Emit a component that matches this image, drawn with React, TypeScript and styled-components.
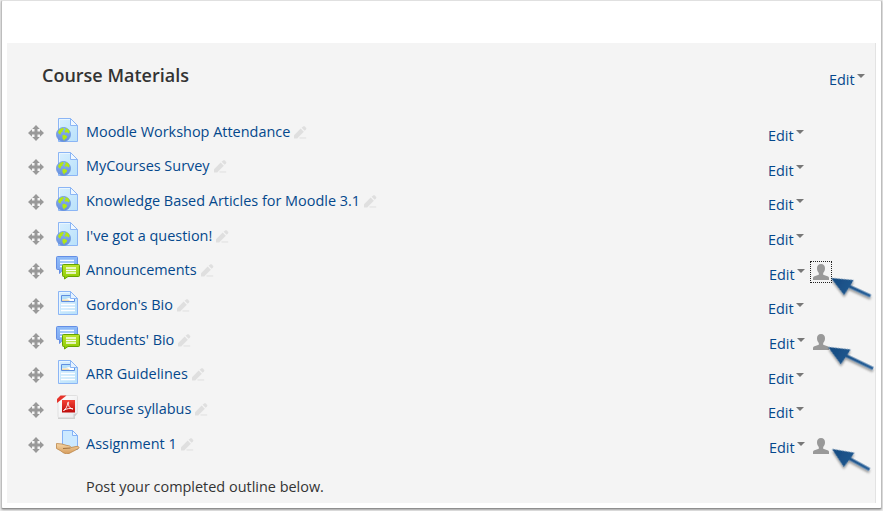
import React from "react";
import styled, { createGlobalStyle } from "styled-components";

const GlobalStyle = createGlobalStyle`
  * { box-sizing: border-box; }
  body { margin: 0; background: #fff; }
`;

const Backdrop = styled.div`
  width: 883px;
  height: 511px;
  padding: 0 1px 2px;
  background: #ececec;
  overflow: hidden;
`;

const Window = styled.div`
  height: 509px;
  padding: 42px 5px 0 5px;
  background: #fff;
  border-style: solid;
  border-width: 1px;
  border-color: #e0e0e0 #bdbdbd #8f8f8f #bdbdbd;
  border-radius: 2px;
  box-shadow: 0 1px 2px rgba(0, 0, 0, 0.3);
  font-family: "Open Sans", "Noto Sans", sans-serif;
  font-size: 14.45px;
  color: #333;
`;

const Section = styled.section`
  width: 869px;
  height: 460px;
  background: #f4f4f4;
  border-right: 1px solid #e3e3e3;
`;

const Header = styled.header`
  display: flex;
  justify-content: space-between;
  height: 73px;
  padding: 19px 10px 0 35px;
`;

const Title = styled.h3`
  margin: 0;
  font-size: 18px;
  line-height: 26px;
  font-weight: 600;
  color: #333;
  white-space: nowrap;
`;

const List = styled.ul`
  list-style: none;
  margin: 0;
  padding: 0;
`;

const Row = styled.li`
  display: flex;
  align-items: flex-start;
  height: 34.67px;
  padding-left: 21px;
`;

const Handle = styled.svg`
  flex: none;
  width: 16px;
  height: 16px;
  margin-top: 8.8px;
`;

const Activity = styled.div`
  flex: none;
  display: flex;
  align-items: flex-start;
  width: 724px;
  padding-left: 12px;
`;

const ActivityIcon = styled.svg`
  flex: none;
  width: 25px;
  height: 24px;
  margin: 1.7px 5px 0 0;
`;

const ActivityLink = styled.a`
  color: #04488c;
  line-height: 20px;
  margin-top: 5.7px;
  white-space: nowrap;
`;

const Pencil = styled.svg`
  flex: none;
  width: 13px;
  height: 13px;
  margin: 9.8px 0 0 4px;
`;

const EditMenu = styled.a<{ $top: number; $shift?: boolean }>`
  flex: none;
  display: flex;
  align-items: flex-start;
  justify-content: space-between;
  width: 36px;
  height: 20px;
  line-height: 20px;
  margin-top: ${(p) => p.$top}px;
  margin-left: ${(p) => (p.$shift ? 1 : 0)}px;
  color: #04488c;
`;

const Caret = styled.span`
  margin-top: 4px;
  border: 4px solid transparent;
  border-top-color: #777;
  border-bottom: 0;
`;

const GroupMode = styled.span<{ $focused?: boolean }>`
  flex: none;
  display: flex;
  align-items: center;
  justify-content: center;
  width: 22px;
  height: 22px;
  margin: 6.7px 0 0 5px;
  border: 1px ${(p) => (p.$focused ? "dotted #222" : "solid transparent")};
`;

const Pointer = styled.svg<{ $dx: number; $dy: number }>`
  flex: none;
  width: 46px;
  height: 30px;
  overflow: visible;
  margin: ${(p) => p.$dy}px 0 0 ${(p) => p.$dx}px;
`;

const Note = styled.p`
  margin: 14px 0 0 79px;
  line-height: 20px;
`;

const Palette = styled.svg`
  display: block;
  width: 0;
  height: 0;
`;

type Kind = "url" | "forum" | "page" | "pdf" | "assign";

const MoveIcon = () => (
  <Handle viewBox="0 0 16 16">
    <path
      fill="#999"
      d="M8 0l3.800 4H9.500v2.500H12V4.200L16 8l-4 3.800V9.500H9.500V12h2.300L8 16l-3.800-4h2.300V9.500H4v2.300L0 8l4-3.800v2.300h2.500V4H4.200z"
    />
  </Handle>
);

const Paper = () => (
  <>
    <path d="M2.500.5h12l7 7v16h-19z" fill="url(#paper)" stroke="#8bb5f5" />
    <path d="M3.500 22.500v-21h10.500" fill="none" stroke="#e9f6ff" />
    <path d="M14.500.5v7h7z" fill="#f0f8ff" stroke="#8bb5f5" />
  </>
);

const KindIcon = ({ kind }: { kind: Kind }) => (
  <ActivityIcon viewBox="0 0 25 24">
    {kind === "url" && (
      <>
        <Paper />
        <circle cx="7.500" cy="16.500" r="7" fill="url(#globe)" stroke="#6690dd" strokeWidth=".8" />
        <path
          fill="#b2e713"
          d="M2 14l2-3 3-1.200 1 1.400-1.600 1.200.3 1.400-1.700.6-.3 2-1.700-.3zM9 10l3 1 1.600 2.400-.6 2-2-1.200-2 .6-.5-1.800 1.300-1zM6.500 17.300l2-.5 2.600 1.500-.6 2-1.800 1-.5 1.700-1.800-3z"
        />
      </>
    )}
    {kind === "page" && (
      <>
        <Paper />
        <path d="M5.500 4.500h13v6h-13z" fill="#fff" stroke="#5f8fe0" />
        <path d="M6 8.500h6l2 1.500H6z" fill="#efd9a8" />
        <path d="M6 5h10v3l-3-1-4 1.200H6z" fill="#b4e0fa" />
        <path d="M14.500.5v7h7z" fill="#e6f3ff" stroke="#8bb5f5" />
        <path d="M5 13.500h14M5 16.500h14M5 19.500h14" stroke="#fff" strokeWidth="1.500" />
      </>
    )}
    {kind === "forum" && (
      <>
        <path
          d="M1.500.5h19a1 1 0 0 1 1 1v11a1 1 0 0 1-1 1H7L3.500 17.500v-4h-2a1 1 0 0 1-1-1v-11a1 1 0 0 1 1-1z"
          fill="url(#chat)"
          stroke="#648ee5"
        />
        <path d="M4 4.500h14M4 7.500h14M4 10.500h10" stroke="#f4faff" strokeWidth="1.300" />
        <path
          d="M7.500 8.500h15a1 1 0 0 1 1 1v10a1 1 0 0 1-1 1H12L8.500 23v-2.500h-1a1 1 0 0 1-1-1v-10a1 1 0 0 1 1-1z"
          fill="url(#reply)"
          stroke="#65a300"
        />
        <path d="M10 12h10M10 14.500h10M10 17h10" stroke="#fbfff0" strokeWidth="1.300" />
      </>
    )}
    {kind === "pdf" && (
      <>
        <path d="M2 23h17" stroke="#c4c4c4" strokeWidth="1.500" />
        <path d="M8.500.5h12a1 1 0 0 1 1 1v16.500l-4 4.500H3a1 1 0 0 1-1-1V7z" fill="url(#sheet)" stroke="#e0e0e0" />
        <path d="M1 8V4L4.500.5h6z" fill="#e6342b" />
        <path d="M21.500 18l-4 5v-4z" fill="#ccc" />
        <path d="M6 5h13v12.500H6z" fill="url(#pdf)" />
        <path
          d="M7.500 15.500c2-1 4-4 4.300-8 .2-1 1.200-.4.8.8-.6 3 1.500 5.200 4.400 5.700-2.500-1-6-.7-9.500 1.500z"
          fill="none"
          stroke="#fff"
          strokeWidth=".9"
        />
      </>
    )}
    {kind === "assign" && (
      <>
        <path d="M6.500.5h10l5 5v14h-15z" fill="#cce9ff" stroke="#83b1f6" />
        <path d="M16.500.5v5h5z" fill="#edf7ff" stroke="#83b1f6" />
        <path
          d="M.5 13.500L6 14l5 1.500c2 0 3.500.5 4 2l5-1c2-.5 4 .5 2.500 2l-9.500 5c-3 1-6-.5-8-2.500L.5 18.500z"
          fill="url(#hand)"
          stroke="#bc8649"
          strokeWidth=".8"
        />
        <path d="M7 18.500l7.500-.5" stroke="#9f713e" />
      </>
    )}
  </ActivityIcon>
);

const PencilIcon = () => (
  <Pencil viewBox="0 0 13 13">
    <path d="M0 12.500V9.300L6.700 2.600l3.100 3.100L3.200 12.500z" fill="#dfdfdf" />
    <path d="M7.600 1.800L9.200.4q.8-.6 1.500 0l1.400 1.400q.6.800 0 1.500l-1.400 1.500z" fill="#dfdfdf" />
    <path d="M5.500 12h6.700" stroke="#dfdfdf" />
  </Pencil>
);

const Person = () => (
  <svg width="16" height="16" viewBox="0 0 16 16">
    <path
      fill="#999"
      d="M8 0c2.600 0 4 1.700 4 4.200 0 2-.7 3.700-1.800 4.800v1.700l4.300 1.500c1 .4 1.500 1 1.500 2V16H0v-1.800c0-1 .5-1.600 1.500-2l4.300-1.500V9C4.700 7.900 4 6.200 4 4.200 4 1.700 5.400 0 8 0z"
    />
  </svg>
);

const Arrow = ({ dx, dy, tail }: { dx: number; dy: number; tail: [number, number] }) => {
  const len = Math.hypot(tail[0], tail[1]);
  const angle = (Math.atan2(tail[1], tail[0]) * 180) / Math.PI;
  return (
    <Pointer $dx={dx} $dy={dy} viewBox="0 0 46 30">
      <g transform={`rotate(${angle})`} filter="url(#shadow)">
        <path d={`M0 0L21.500-7.500 20.700-1.600H${len}V1.600H20.200L19 10z`} fill="url(#arrow)" />
      </g>
    </Pointer>
  );
};

const Defs = () => (
  <Palette>
    <defs>
      <linearGradient id="paper" x2="1" y2="1">
        <stop stopColor="#d8efff" />
        <stop offset="1" stopColor="#b9e1fa" />
      </linearGradient>
      <linearGradient id="globe" x2="0" y2="1">
        <stop stopColor="#8cb4f2" />
        <stop offset="1" stopColor="#668edc" />
      </linearGradient>
      <linearGradient id="chat" x2="0" y2="1">
        <stop stopColor="#8fbcf9" />
        <stop offset="1" stopColor="#7ba4f0" />
      </linearGradient>
      <linearGradient id="reply" x2="0" y2="1">
        <stop stopColor="#bce42d" />
        <stop offset="1" stopColor="#8bcb00" />
      </linearGradient>
      <linearGradient id="sheet" x2="1" y2="1">
        <stop stopColor="#ffffff" />
        <stop offset="1" stopColor="#e8e8ea" />
      </linearGradient>
      <linearGradient id="pdf" x2="0" y2="1">
        <stop stopColor="#f44236" />
        <stop offset="1" stopColor="#bd0b0b" />
      </linearGradient>
      <linearGradient id="hand" x2="0" y2="1">
        <stop stopColor="#f7d7a6" />
        <stop offset="1" stopColor="#d59b5b" />
      </linearGradient>
      <linearGradient id="arrow" x2="1" y2="0">
        <stop stopColor="#144a80" />
        <stop offset="1" stopColor="#2a629b" />
      </linearGradient>
      <filter id="shadow" x="-20%" y="-40%" width="140%" height="200%">
        <feDropShadow dx="1" dy="2" stdDeviation="1" floodColor="#000" floodOpacity=".4" />
      </filter>
    </defs>
  </Palette>
);

interface Item {
  kind: Kind;
  name: string;
  focused?: boolean;
  arrow?: { dx: number; dy: number; tail: [number, number] };
}

const items: Item[] = [
  { kind: "url", name: "Moodle Workshop Attendance" },
  { kind: "url", name: "MyCourses Survey" },
  { kind: "url", name: "Knowledge Based Articles for Moodle 3.1" },
  { kind: "url", name: "I've got a question!" },
  { kind: "forum", name: "Announcements", focused: true, arrow: { dx: -1, dy: 23, tail: [39.5, 18] } },
  { kind: "page", name: "Gordon's Bio" },
  { kind: "forum", name: "Students' Bio", arrow: { dx: -4, dy: 23, tail: [45, 21.5] } },
  { kind: "page", name: "ARR Guidelines" },
  { kind: "pdf", name: "Course syllabus" },
  { kind: "assign", name: "Assignment 1", arrow: { dx: 0, dy: 21, tail: [37.5, 20.5] } },
];

export default function App() {
  return (
    <>
      <GlobalStyle />
      <Defs />
      <Backdrop>
        <Window>
          <Section>
            <Header>
              <Title>Course Materials</Title>
              <EditMenu $top={8}>
                Edit
                <Caret />
              </EditMenu>
            </Header>
            <List>
              {items.map((item) => (
                <Row key={item.name}>
                  <MoveIcon />
                  <Activity>
                    <KindIcon kind={item.kind} />
                    <ActivityLink>{item.name}</ActivityLink>
                    <PencilIcon />
                  </Activity>
                  <EditMenu $top={10} $shift={!!item.arrow}>
                    Edit
                    <Caret />
                  </EditMenu>
                  {item.arrow && (
                    <>
                      <GroupMode $focused={item.focused}>
                        <Person />
                      </GroupMode>
                      <Arrow {...item.arrow} />
                    </>
                  )}
                </Row>
              ))}
            </List>
            <Note>Post your completed outline below.</Note>
          </Section>
        </Window>
      </Backdrop>
    </>
  );
}
